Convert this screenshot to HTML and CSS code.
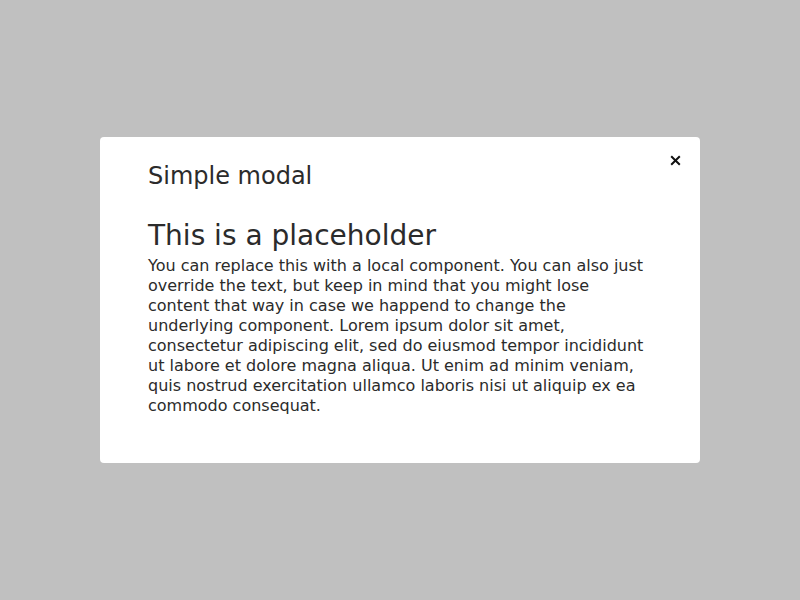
FILE: index.html
```html
<!DOCTYPE html>
<html>
<head>
<meta charset="utf-8">
<link rel="stylesheet" href="styles.css">
</head>
<body>
<div class="overlay">
  <div class="modal">
    <button class="close" aria-label="Close">
      <svg width="11" height="11" viewBox="0 0 11 11"><path d="M1.2 1.2 L9.8 9.8 M9.8 1.2 L1.2 9.8" stroke="#111" stroke-width="2" fill="none"/></svg>
    </button>
    <h2 class="title">Simple modal</h2>
    <div class="content">
      <h1 class="heading">This is a placeholder</h1>
      <p class="text">You can replace this with a local component. You can also just override the text, but keep in mind that you might lose content that way in case we happend to change the underlying component. Lorem ipsum dolor sit amet, consectetur adipiscing elit, sed do eiusmod tempor incididunt ut labore et dolore magna aliqua. Ut enim ad minim veniam, quis nostrud exercitation ullamco laboris nisi ut aliquip ex ea commodo consequat.</p>
    </div>
  </div>
</div>
</body>
</html>
```
FILE: styles.css
```css
html, body { margin: 0; padding: 0; }
body {
  width: 800px;
  height: 600px;
  background: #c0c0c0;
  font-family: "DejaVu Sans", sans-serif;
  color: #2b2b2b;
}
.overlay {
  height: 600px;
  display: flex;
  align-items: center;
  justify-content: center;
}
.modal {
  position: relative;
  width: 600px;
  box-sizing: border-box;
  background: #fff;
  border-radius: 4px;
  padding: 24px 48px 47px;
}
.close {
  position: absolute;
  right: 19px;
  top: 18px;
  width: 11px;
  height: 11px;
  padding: 0;
  border: 0;
  background: none;
  display: flex;
}
.title {
  margin: 0;
  font-size: 24px;
  font-weight: normal;
  line-height: 30px;
}
.content { margin-top: 25px; }
.heading {
  margin: 0;
  font-size: 28px;
  font-weight: normal;
  line-height: 40px;
}
.text {
  margin: 0;
  font-size: 16px;
  line-height: 20px;
}
```
